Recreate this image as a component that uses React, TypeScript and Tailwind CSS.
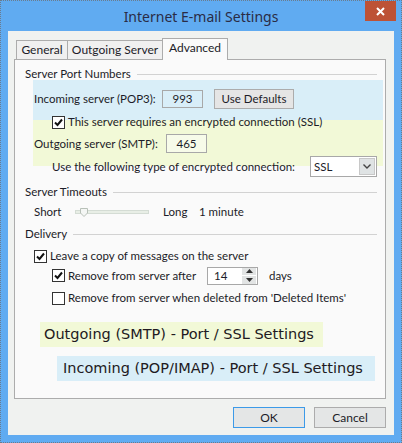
import React from 'react';

const font = "font-['Lato','Noto_Sans',sans-serif]";

function CheckBox({ checked }: { checked: boolean }) {
  return (
    <span className="w-[13px] h-[13px] border border-[#333] bg-white flex items-center justify-center shrink-0">
      {checked && (
        <svg width="9" height="9" viewBox="0 0 9 9">
          <path d="M1 4.5 L3.5 7 L8 1.5" fill="none" stroke="#111" strokeWidth="2" />
        </svg>
      )}
    </span>
  );
}

function GroupHeader({ label, className = '' }: { label: string; className?: string }) {
  return (
    <div className={`flex items-center h-[12px] leading-[12px] pl-[10px] pr-[8px] ${className}`}>
      <span className="whitespace-nowrap">{label}</span>
      <span className="flex-1 h-px bg-[#d2d2d2] ml-[6px]" />
    </div>
  );
}

export default function App() {
  return (
    <div className={`w-[402px] h-[443px] bg-[#60abf1] border border-dotted border-[#6b7b8c] flex flex-col text-[11.5px] text-[#1c1c28] whitespace-nowrap ${font}`}>
      {/* title bar */}
      <div className="relative h-[30px] shrink-0 flex items-center justify-center">
        <span className="text-[14px] text-[#2a2c45] pt-[1px] font-['Noto_Sans',sans-serif]">Internet E-mail Settings</span>
        <button className="absolute top-0 right-[5px] w-[31px] h-[20px] bg-[#bd5236] flex items-center justify-center">
          <svg width="9" height="9" viewBox="0 0 9 9">
            <path d="M1 1 L8 8 M8 1 L1 8" stroke="#fff" strokeWidth="2" />
          </svg>
        </button>
      </div>

      {/* client area */}
      <div className="ml-[7px] w-[386px] h-[404px] bg-[#f0f2f0] pl-[6px] pr-[8px] pt-[6px] flex flex-col">
        {/* tabs */}
        <div className="flex items-end h-[22px] pl-[2px] text-[12px]">
          <div className="h-[19px] w-[52px] border border-b-0 border-[#acacac] bg-[#f0f0f0] flex items-center justify-center">General</div>
          <div className="h-[19px] w-[96px] -ml-px border border-b-0 border-[#acacac] bg-[#f0f0f0] flex items-center justify-center">Outgoing Server</div>
          <div className="h-[22px] w-[66px] -ml-px mb-[-1px] relative z-10 border border-b-0 border-[#acacac] bg-[#fafafa] flex items-center justify-center pb-[3px]">Advanced</div>
        </div>

        {/* tab page */}
        <div className="h-[340px] border border-[#acacac] bg-[#fafafa] flex flex-col pt-[8px]">
          <GroupHeader label="Server Port Numbers" />

          {/* incoming */}
          <div className="ml-[18px] mr-[2px] bg-[#d9eef8] pt-[9px] pb-[6px]">
            <div className="flex items-center h-[20px] pl-[1px]">
              <span className="w-[128px]">Incoming server (POP3):</span>
              <span className="w-[41px] h-[18px] border border-[#a8a8a8] bg-[#d9eef8] flex items-center justify-center">993</span>
              <button className="ml-[11px] w-[80px] h-[20px] border border-[#acacac] bg-[#e5e5e5] flex items-center justify-center">Use Defaults</button>
            </div>
          </div>
          <div className="ml-[18px] mr-[2px] h-[14px] bg-[linear-gradient(to_bottom,#d9eef8_5px,#f2f9d7_5px)] flex items-center pl-[19px]">
            <CheckBox checked />
            <span className="ml-[3px]">This server requires an encrypted connection (SSL)</span>
          </div>

          {/* outgoing */}
          <div className="ml-[18px] mr-[2px] bg-[#f2f9d7] pt-[5px] pb-[3px]">
            <div className="flex items-center h-[19px] pl-[1px]">
              <span className="w-[132px]">Outgoing server (SMTP):</span>
              <span className="w-[41px] h-[19px] border border-[#a8a8a8] bg-[#f7fbe9] flex items-center justify-center">465</span>
            </div>
          </div>
          <div className="ml-[18px] mr-[2px] h-[21px] bg-[linear-gradient(to_bottom,#f2f9d7_10px,#fafafa_10px)] flex items-center pl-[19px] pr-[6px]">
            <span className="flex-1">Use the following type of encrypted connection:</span>
            <div className="w-[67px] h-[21px] border border-[#a8a8a8] bg-white flex items-center pl-[3px] pr-px">
              <span className="flex-1">SSL</span>
              <span className="w-[16px] h-[17px] border border-[#c8c8c8] bg-[#dfe3e4] flex items-center justify-center">
                <svg width="8" height="5" viewBox="0 0 8 5">
                  <path d="M0.5 0.5 L4 4 L7.5 0.5" fill="none" stroke="#444" strokeWidth="1.4" />
                </svg>
              </span>
            </div>
          </div>

          <GroupHeader label="Server Timeouts" className="mt-[9px]" />
          <div className="flex items-center h-[14px] mt-[7px] pl-[19px]">
            <span className="w-[41px]">Short</span>
            <div className="relative w-[74px] h-[4px] border border-[#d4dcd4] bg-[#e8eee6]">
              <svg className="absolute left-[4px] top-[-3px]" width="8" height="9" viewBox="0 0 8 9">
                <path d="M0.5 0.5 H7.5 V5 L4 8.5 L0.5 5 Z" fill="#f4f6f4" stroke="#b8c0b8" />
              </svg>
            </div>
            <span className="ml-[14px] w-[36px]">Long</span>
            <span>1 minute</span>
          </div>

          <GroupHeader label="Delivery" className="mt-[9px]" />
          <div className="flex items-center h-[14px] mt-[9px] pl-[19px]">
            <CheckBox checked />
            <span className="ml-[3px]">Leave a copy of messages on the server</span>
          </div>
          <div className="flex items-center h-[19px] mt-[3px] pl-[37px]">
            <CheckBox checked />
            <span className="ml-[3px] w-[139px]">Remove from server after</span>
            <div className="w-[51px] h-[18px] border border-[#a8a8a8] bg-white flex items-center pl-[6px] pr-px">
              <span className="flex-1">14</span>
              <span className="w-[14px] h-[16px] flex flex-col gap-px">
                <span className="flex-1 bg-[#e2e4e4] flex items-center justify-center">
                  <svg width="7" height="4" viewBox="0 0 7 4"><path d="M0 4 L3.5 0 L7 4 Z" fill="#333" /></svg>
                </span>
                <span className="flex-1 bg-[#e2e4e4] flex items-center justify-center">
                  <svg width="7" height="4" viewBox="0 0 7 4"><path d="M0 0 L3.5 4 L7 0 Z" fill="#333" /></svg>
                </span>
              </span>
            </div>
            <span className="ml-[11px]">days</span>
          </div>
          <div className="flex items-center h-[14px] mt-[6px] pl-[37px]">
            <CheckBox checked={false} />
            <span className="ml-[3px]">Remove from server when deleted from 'Deleted Items'</span>
          </div>

          <div className="ml-[25px] mt-[17px] w-[283px] h-[25px] bg-[#f2f9d7] flex items-center pl-[4px] text-[14.5px] font-['DejaVu_Sans',sans-serif] text-[#221a22]">
            Outgoing (SMTP) - Port / SSL Settings
          </div>
          <div className="ml-[42px] mt-[9px] w-[318px] h-[25px] bg-[#d9eef8] flex items-center pl-[6px] text-[14.5px] font-['DejaVu_Sans',sans-serif] text-[#221a22]">
            Incoming (POP/IMAP) - Port / SSL Settings
          </div>
        </div>

        {/* buttons */}
        <div className="flex justify-end gap-[9px] mt-[8px] text-[12px]">
          <button className="w-[72px] h-[21px] border border-[#3c9ae8] bg-[#e4e6e6] flex items-center justify-center">OK</button>
          <button className="w-[72px] h-[21px] border border-[#acacac] bg-[#e4e6e6] flex items-center justify-center">Cancel</button>
        </div>
      </div>
    </div>
  );
}
